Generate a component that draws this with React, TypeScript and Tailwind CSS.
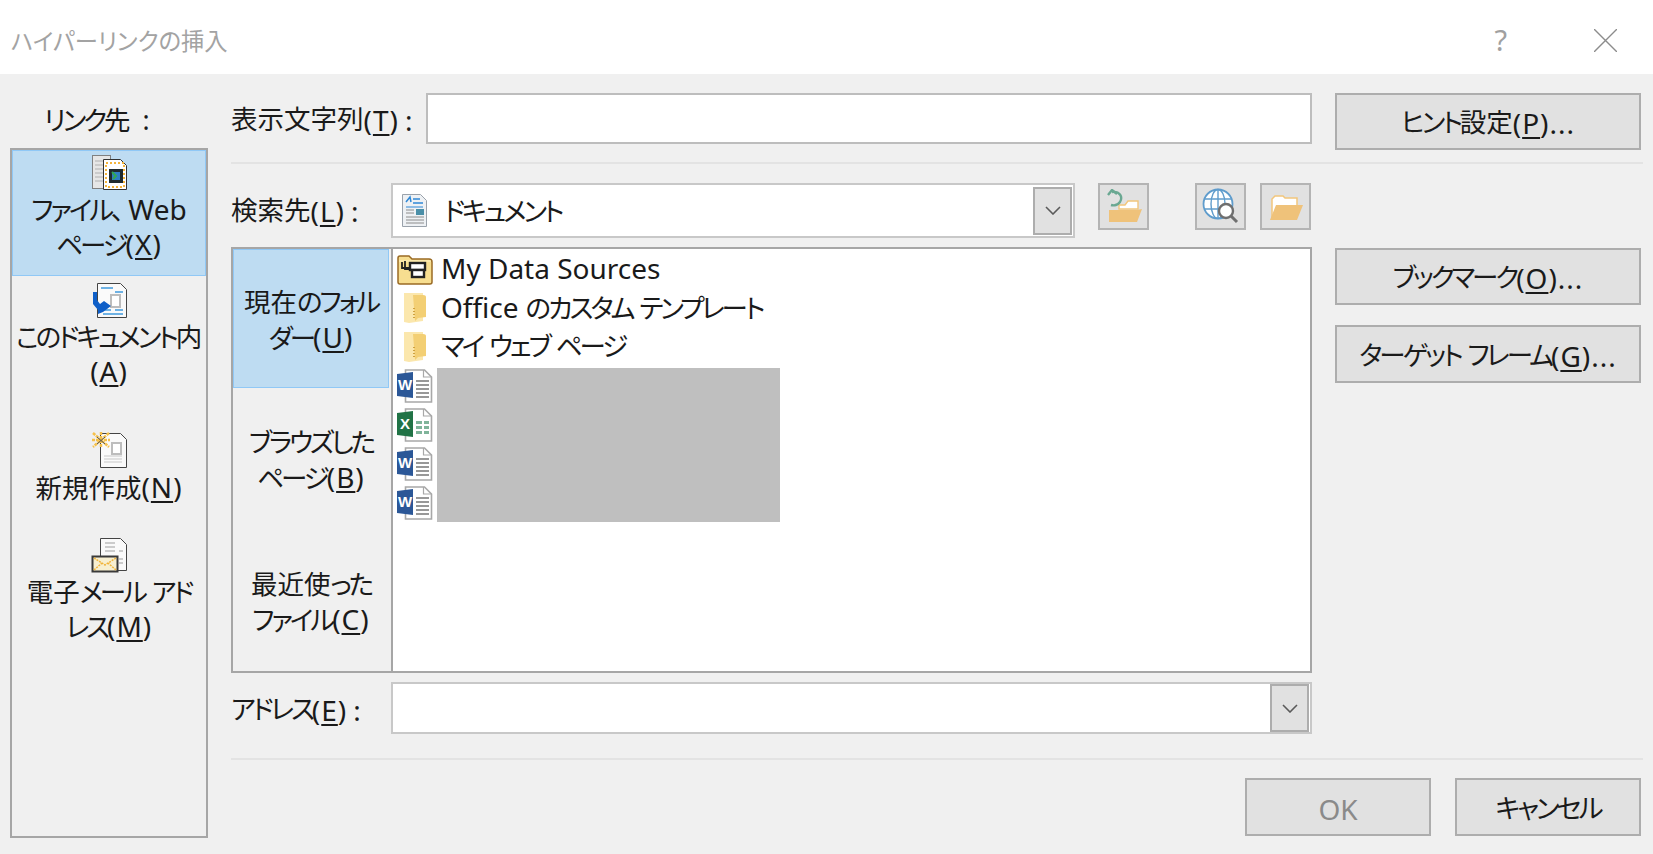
import type { ReactNode } from "react";

const font =
  "font-['Noto_Sans','Noto_Sans_CJK_JP',sans-serif] [font-feature-settings:'palt']";

// meiryo-ish spacing: kana sets tighter, latin sets bigger than the kanji
function K({ children }: { children: ReactNode }) {
  return <span className="tracking-[-3px] [word-spacing:3px]">{children}</span>;
}

function L({ children }: { children: ReactNode }) {
  return <span className="text-[28px]">{children}</span>;
}

function Acc({ k }: { k: string }) {
  return (
    <span className="text-[28px] tracking-[1px]">
      (<u className="underline-offset-[3px]">{k}</u>)
    </span>
  );
}

function Colon() {
  return <span className="ml-[6px] text-[28px]">:</span>;
}

function PagesIcon() {
  return (
    <svg width="37" height="37" viewBox="0 0 37 37">
      <rect x="1.5" y="1.5" width="18" height="33" fill="#e6e6e6" stroke="#808080" />
      <path d="M4 7h11M4 11h11M4 15h8M4 19h8M4 23h8M4 27h8" stroke="#b0b0b0" />
      <path d="M12.5 5.5h17l6 6v24h-23z" fill="#fff" stroke="#333" />
      <rect x="15" y="9" width="18" height="24" fill="none" stroke="#f5b53c" strokeWidth="2" strokeDasharray="2 2" />
      <rect x="18" y="15" width="14" height="14" fill="#1f2a2e" />
      <rect x="21" y="18" width="8" height="8" fill="#2e7fc4" />
      <path d="M21 18l4 4-3 3" stroke="#32a852" strokeWidth="2" fill="none" />
    </svg>
  );
}

function ThisDocIcon() {
  return (
    <svg width="37" height="37" viewBox="0 0 37 37">
      <path d="M6.5 1.5h23l6 6v28h-29z" fill="#fafafa" stroke="#444" />
      <path d="M10 6h12M24 10h8M24 28h8M12 28h8M12 32h20" stroke="#6eb2e4" strokeWidth="2" />
      <rect x="20" y="13" width="9" height="12" fill="#fff" stroke="#bdbdbd" strokeWidth="2" />
      <path d="M2 10v12l5 6v4l5-2 8-6-7-5-4 3-3-4v-8z" fill="#0f5fc8" />
    </svg>
  );
}

function NewDocIcon() {
  return (
    <svg width="37" height="37" viewBox="0 0 37 37">
      <path d="M9.5 1.5h20l6 6v28h-26z" fill="#fafafa" stroke="#444" />
      <rect x="21" y="11" width="9" height="11" fill="#fff" stroke="#bdbdbd" strokeWidth="2" />
      <path d="M13 24h18M13 27h18M13 30h18" stroke="#c8c8c8" />
      <path d="M2 1l16 14M18 1L2 15M10 0v16M1 8h18" stroke="#f5c04a" strokeWidth="2.5" strokeDasharray="3 1" />
      <path d="M6 5l8 7M14 5l-8 7" stroke="#555" />
    </svg>
  );
}

function MailIcon() {
  return (
    <svg width="37" height="37" viewBox="0 0 37 37">
      <path d="M9.5 1.5h20l6 6v26h-26z" fill="#fafafa" stroke="#444" />
      <path d="M14 6h10M14 10h10M14 14h10M28 14h4M28 22h4M28 26h4" stroke="#bdbdbd" strokeWidth="1.5" />
      <rect x="1.5" y="19.5" width="25" height="15" fill="#f7efd0" stroke="#3a3a3a" strokeWidth="2" />
      <path d="M3 21l11 7 11-7M3 33l8-7M25 33l-8-7" stroke="#f1b43a" strokeWidth="1.5" fill="none" strokeDasharray="2 1" />
    </svg>
  );
}

function ComboDocIcon() {
  return (
    <svg width="25" height="33" viewBox="0 0 25 33">
      <path d="M.5.5h18l6 6v26H.5z" fill="#eef1f4" stroke="#9aa2ab" />
      <path d="M4 8l4-5 1 5M11 5h7M11 9h10" stroke="#2f88d6" strokeWidth="1.5" fill="none" />
      <path d="M4 13h17" stroke="#2f88d6" />
      <rect x="14" y="15" width="8" height="6" fill="#4a8fa8" />
      <path d="M4 16h8M4 19h8M4 23h18M4 26h18M4 29h18" stroke="#8c8c8c" />
    </svg>
  );
}

function DataSourceIcon() {
  return (
    <svg width="36" height="32" viewBox="0 0 36 32">
      <path d="M1 5q0-2 2-2h9l3 3h17q3 0 3 3v20q0 2-2 2H3q-2 0-2-2z" fill="#f7de90" stroke="#9a6b25" strokeWidth="1.5" />
      <path d="M2 8h32" stroke="#fff3c4" />
      <rect x="13" y="10" width="15" height="7" fill="#fff" stroke="#222" strokeWidth="2.4" />
      <rect x="15" y="17" width="12" height="7" fill="#fff" stroke="#222" strokeWidth="2.4" />
      <path d="M8 8v8h6M5 9v6h8" stroke="#222" strokeWidth="1.8" fill="none" />
    </svg>
  );
}

function StandingFolder() {
  return (
    <svg width="22" height="31" viewBox="0 0 22 31">
      <path d="M0 1h19v28l-14 2-5-1z" fill="#fbe7ad" />
      <path d="M9 3h10q3 0 3 2v20l-8 1-3 3z" fill="#f3cf74" />
      <path d="M10 16v12" stroke="#cfa13f" strokeWidth="2" strokeDasharray="1 2" />
    </svg>
  );
}

function OfficeFileIcon({ color, letter, excel }: { color: string; letter: string; excel?: boolean }) {
  return (
    <svg width="36" height="34" viewBox="0 0 36 34">
      <path d="M8.5 1h19l7 7v25h-26z" fill="#fff" stroke="#a8a8a8" strokeWidth="1.6" />
      <path d="M26.5 1v7h8" fill="none" stroke="#a8a8a8" strokeWidth="1.2" />
      {excel ? (
        <path d="M19 13h6v3h-6zM27 13h5v3h-5zM19 18h6v3h-6zM27 18h5v3h-5zM19 23h6v3h-6zM27 23h5v3h-5z" fill="#7fb49a" />
      ) : (
        <path d="M19 12h13M19 16h13M19 20h13M19 24h13M19 28h13" stroke="#777" strokeWidth="1.3" />
      )}
      <path d="M0 5l16-2v26L0 27z" fill={color} />
      <text x="8" y="21" textAnchor="middle" fontSize="15" fontWeight="700" fill="#fff" fontFamily="Liberation Sans, sans-serif">
        {letter}
      </text>
    </svg>
  );
}

function FolderBackIcon() {
  return (
    <svg width="36" height="36" viewBox="0 0 36 36">
      <path d="M13 16h6l3-4h10v8H13z" fill="#fff" stroke="#f2c67c" strokeWidth="1.4" />
      <path d="M3 33V21h28l5-1-5 13z" fill="#efc27a" />
      <path d="M2 6l4-5 5 4" fill="none" stroke="#6aa892" strokeWidth="2.4" />
      <path d="M6 3c8-1 11 5 8 10-2 3-6 4-9 3" fill="none" stroke="#6aa892" strokeWidth="2.4" />
    </svg>
  );
}

function GlobeSearchIcon() {
  return (
    <svg width="37" height="37" viewBox="0 0 37 37">
      <circle cx="16" cy="16" r="14.5" fill="#fff" stroke="#5f9ccc" strokeWidth="1.8" />
      <ellipse cx="16" cy="16" rx="7" ry="14.5" fill="none" stroke="#5f9ccc" strokeWidth="1.4" />
      <path d="M16 1v30M2 11h28M2 21h28" stroke="#5f9ccc" strokeWidth="1.4" />
      <circle cx="24" cy="23" r="7" fill="#fff" stroke="#6f6f6f" strokeWidth="2.4" />
      <path d="M29 28l6 6" stroke="#6f6f6f" strokeWidth="3" />
    </svg>
  );
}

function OpenFolderIcon() {
  return (
    <svg width="34" height="28" viewBox="0 0 34 28">
      <path d="M3 26V6l3-3h8l2 2h12v9H8l-5 12z" fill="#fff" stroke="#f2c67c" strokeWidth="1.5" />
      <path d="M1 27l6-15h27l-6 15z" fill="#efc27a" />
    </svg>
  );
}

function Chevron() {
  return (
    <svg width="16" height="9" viewBox="0 0 16 9" fill="none" stroke="#5a5a5a" strokeWidth="1.6">
      <path d="M1 1l7 7 7-7" />
    </svg>
  );
}

function DialogButton({ children, className = "" }: { children: ReactNode; className?: string }) {
  return (
    <button className={`flex items-center justify-center whitespace-pre bg-[#e1e1e1] border-2 border-[#adadad] pt-[3px] text-[26.5px] ${className}`}>
      {children}
    </button>
  );
}

function IconButton({ children, className = "" }: { children: ReactNode; className?: string }) {
  return (
    <button className={`flex h-[47px] items-center justify-center bg-[#e1e1e1] border-2 border-[#b4b4b4] ${className}`}>
      {children}
    </button>
  );
}

function DropButton() {
  return (
    <div className="flex h-[48px] w-[39px] items-center justify-center bg-[#e1e1e1] border-2 border-[#adadad]">
      <Chevron />
    </div>
  );
}

function SideItem({ icon, lines, className = "" }: { icon: ReactNode; lines: ReactNode[]; className?: string }) {
  return (
    <div className={`flex flex-col items-center text-center text-[26.5px] leading-[34px] text-[#1a1a1a] ${className}`}>
      {icon}
      <div className="mt-[1px]">
        {lines.map((l, i) => (
          <div key={i} className="whitespace-pre">
            {l}
          </div>
        ))}
      </div>
    </div>
  );
}

function Tab({ lines, selected, className = "" }: { lines: ReactNode[]; selected?: boolean; className?: string }) {
  return (
    <div className={`flex w-[156px] flex-col items-center justify-center pt-[4px] text-[26.5px] leading-[35px] text-[#1a1a1a] ${selected ? "bg-[#bedcf2] border border-[#90c8f6]" : ""} ${className}`}>
      {lines.map((l, i) => (
        <div key={i} className="whitespace-pre">
          {l}
        </div>
      ))}
    </div>
  );
}

function ListRow({ icon, children }: { icon: ReactNode; children: ReactNode }) {
  return (
    <div className="flex h-[39px] items-center text-[26.5px] text-[#1a1a1a]">
      <div className="flex w-[36px] justify-center">{icon}</div>
      <span className="ml-[8px] whitespace-pre">{children}</span>
    </div>
  );
}

function FileIconCell({ children }: { children: ReactNode }) {
  return <div className="flex h-[39px] items-center">{children}</div>;
}

export default function App() {
  return (
    <div className={`flex h-[854px] w-[1653px] flex-col overflow-hidden bg-[#f0f0f0] ${font}`}>
      {/* title bar */}
      <div className="flex h-[74px] items-center bg-white pl-[11px]">
        <span className="pt-[8px] text-[23.3px] text-[#a3a3a3]">ハイパーリンクの挿入</span>
        <span className="ml-auto pt-[5px] text-[29px] text-[#a0a0a0]">?</span>
        <svg className="ml-[87px] mr-[36px] mt-[6px]" width="23" height="23" viewBox="0 0 23 23" stroke="#8c8c8c" strokeWidth="1.4">
          <path d="M0 0l23 23M23 0L0 23" />
        </svg>
      </div>

      <div className="flex flex-1 pb-[16px] pt-[19px] text-[#1a1a1a]">
        {/* link target sidebar */}
        <div className="ml-[10px] flex w-[198px] flex-col">
          <div className="flex h-[55px] items-center whitespace-pre pl-[34px] text-[26.5px]">
            <K>リンク</K>先<span className="ml-[12px]">:</span>
          </div>
          <div className="flex-1 border-2 border-[#a6a6a6]">
            <SideItem
              className="h-[126px] bg-[#bedcf2] border border-[#90c8f6] pt-[3px]"
              icon={<PagesIcon />}
              lines={[
                <><K>ファイル、</K> <L>Web</L></>,
                <><K>ページ</K><Acc k="X" /></>,
              ]}
            />
            <SideItem
              className="mt-[6px]"
              icon={<ThisDocIcon />}
              lines={[<><K>このドキュメント</K>内</>, <Acc k="A" />]}
            />
            <SideItem
              className="mt-[43px]"
              icon={<NewDocIcon />}
              lines={[<>新規作成<Acc k="N" /></>]}
            />
            <SideItem
              className="mt-[32px]"
              icon={<MailIcon />}
              lines={[<>電子<K>メール アド</K></>, <><K>レス</K><Acc k="M" /></>]}
            />
          </div>
        </div>

        <div className="ml-[23px] flex w-[1412px] flex-col">
          <div className="flex">
            <div className="flex h-[54px] w-[195px] items-center text-[26.5px]">
              表示文字列<Acc k="T" /><Colon />
            </div>
            <div className="h-[51px] w-[886px] bg-white border-2 border-[#bdbdbd]" />
            <DialogButton className="ml-[23px] h-[57px] w-[306px]">
              <K>ヒント</K>設定<Acc k="P" /><span className="text-[28px] tracking-[1px]">...</span>
            </DialogButton>
          </div>

          <div className="mt-[12px] h-[2px] bg-[#e3e3e3]" />

          <div className="mt-[19px] flex">
            <div className="flex h-[55px] w-[160px] items-center text-[26.5px]">
              検索先<Acc k="L" /><Colon />
            </div>
            <div className="flex h-[55px] w-[684px] items-center justify-between bg-white border-2 border-[#c8c8c8] pl-[9px] pr-[1px]">
              <div className="flex items-center">
                <ComboDocIcon />
                <span className="ml-[17px] pt-[3px] text-[26.5px]"><K>ドキュメント</K></span>
              </div>
              <DropButton />
            </div>
            <IconButton className="ml-[23px] w-[51px]">
              <FolderBackIcon />
            </IconButton>
            <IconButton className="ml-[46px] w-[51px]">
              <GlobeSearchIcon />
            </IconButton>
            <IconButton className="ml-[14px] w-[51px]">
              <OpenFolderIcon />
            </IconButton>
          </div>

          <div className="mt-[9px] flex">
            {/* file browser */}
            <div className="flex h-[426px] w-[1081px] border-2 border-[#a6a6a6]">
              <div className="flex w-[158px] flex-col">
                <Tab selected className="h-[139px]" lines={[<>現在<K>のフォル</K></>, <><K>ダー</K><Acc k="U" /></>]} />
                <Tab className="h-[141px]" lines={[<K>ブラウズした</K>, <><K>ページ</K><Acc k="B" /></>]} />
                <Tab className="h-[142px]" lines={[<>最近使<K>った</K></>, <><K>ファイル</K><Acc k="C" /></>]} />
              </div>
              <div className="flex-1 bg-white border-l-2 border-[#a6a6a6] pl-[4px]">
                <ListRow icon={<DataSourceIcon />}><L>My Data Sources</L></ListRow>
                <ListRow icon={<StandingFolder />}><L>Office</L> <K>のカスタム テンプレート</K></ListRow>
                <ListRow icon={<StandingFolder />}><K>マイ ウェブ ページ</K></ListRow>
                <div className="flex">
                  <div className="flex flex-col">
                    <FileIconCell><OfficeFileIcon color="#2b5797" letter="W" /></FileIconCell>
                    <FileIconCell><OfficeFileIcon color="#217346" letter="X" excel /></FileIconCell>
                    <FileIconCell><OfficeFileIcon color="#2b5797" letter="W" /></FileIconCell>
                    <FileIconCell><OfficeFileIcon color="#2b5797" letter="W" /></FileIconCell>
                  </div>
                  <div className="ml-[4px] mt-[2px] h-[154px] w-[343px] bg-[#bfbfbf]" />
                </div>
              </div>
            </div>

            <div className="ml-[23px] mt-[1px] flex w-[306px] flex-col">
              <DialogButton className="h-[57px]">
                <K>ブックマーク</K><Acc k="O" /><span className="text-[28px] tracking-[1px]">...</span>
              </DialogButton>
              <DialogButton className="mt-[20px] h-[58px]">
                <K>ターゲット フレーム</K><Acc k="G" /><span className="text-[28px] tracking-[1px]">...</span>
              </DialogButton>
            </div>
          </div>

          <div className="mt-[9px] flex">
            <div className="flex h-[52px] w-[160px] items-center pt-[3px] text-[26.5px]">
              <K>アドレス</K><Acc k="E" /><Colon />
            </div>
            <div className="flex h-[52px] w-[921px] items-center justify-end bg-white border-2 border-[#c8c8c8] pr-[1px]">
              <DropButton />
            </div>
          </div>

          <div className="mt-[24px] h-[2px] bg-[#e3e3e3]" />

          <div className="mt-[18px] flex justify-end gap-[24px] pr-[2px]">
            <DialogButton className="h-[58px] w-[186px] text-[#8a8a8a]"><L>OK</L></DialogButton>
            <DialogButton className="h-[58px] w-[186px]"><K>キャンセル</K></DialogButton>
          </div>
        </div>
      </div>
    </div>
  );
}
